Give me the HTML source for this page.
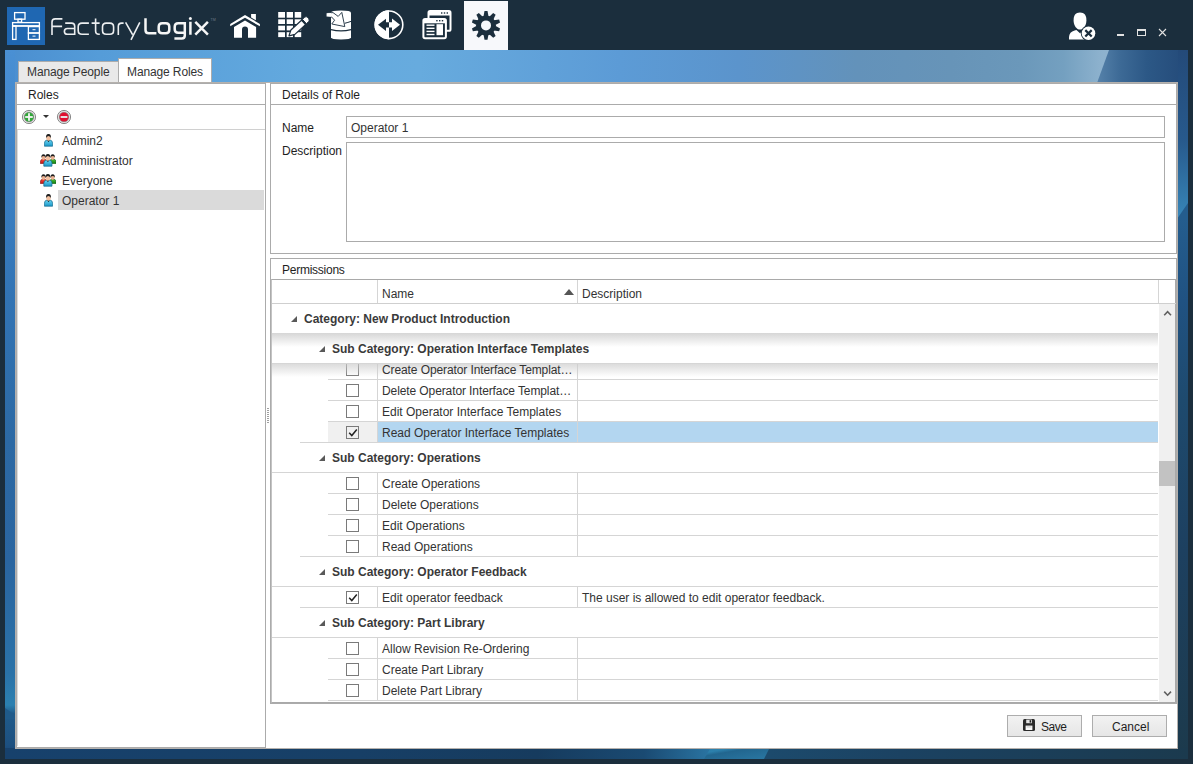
<!DOCTYPE html>
<html>
<head>
<meta charset="utf-8">
<style>
*{box-sizing:border-box;margin:0;padding:0}
html,body{width:1193px;height:764px;overflow:hidden;background:#1b2e3d;font-family:"Liberation Sans",sans-serif;font-size:12px;color:#1e1e1e}
.a{position:absolute}
.t{position:absolute;white-space:nowrap;line-height:14px}
#canvas{left:15px;top:82px;width:1163px;height:667px;background:#fff;border:1px solid #b5b1ad}
.vl{position:absolute;width:1px;background:#ababab}
.hl{position:absolute;height:1px;background:#ababab}
.g{position:absolute;height:1px;background:#d9d9d9}
.cb{position:absolute;width:13px;height:13px;border:1px solid #7a7a7a}
.row{position:absolute;color:#333}
.bold{font-weight:bold;color:#3a3a3a}
.tri{position:absolute;width:0;height:0;border-left:6.5px solid transparent;border-bottom:6.5px solid #595959}
.btn{position:absolute;border:1px solid #adadad;background:linear-gradient(#f2f2f2,#e6e6e6);}
</style>
</head>
<body>
<div class="a" style="left:5px;top:50px;width:1183px;height:33px;background:linear-gradient(90deg,#4a8ed0 0%,#559cd8 8%,#63a9de 25%,#67abde 35%,#5c9bd6 52%,#5b94cc 62%,#6392ba 72%,#6794b8 80%,#6b98ba 86%,#74a0c0 89.5%,#8cb1cd 92.5%,#93b6d1 95%,#93b6d1 100%)"></div>
<div class="a" style="left:1097px;top:50px;width:91px;height:33px;clip-path:polygon(12px 0,91px 0,91px 33px,0 33px);background:linear-gradient(90deg,#5682aa 0%,#3d6a96 25%,#2c5886 55%,#244a79 100%)"></div>
<div class="a" style="left:5px;top:50px;width:10px;height:709px;background:linear-gradient(180deg,#4a90d4 0%,#3f84c8 14%,#3274b4 35%,#2c69a4 55%,#2a65a0 72%,#2a72a8 88%,#2b80b0 92.4%,#1f5a8a 93.6%,#1d5080 98%,#174270 100%)"></div>
<div class="a" style="left:5px;top:705px;width:10px;height:14px;clip-path:polygon(0 3px,10px 10px,10px 14px,0 14px);background:#1f5a8a"></div>
<div class="a" style="left:1178px;top:50px;width:10px;height:709px;background:linear-gradient(180deg,#244a79 0%,#27598c 12.7%,#3786b8 23.6%,#245d8e 23.7%,#205282 35.3%,#1e4a6e 49.4%,#1d4060 70.5%,#1c3a4c 100%)"></div>
<div class="a" style="left:1178px;top:200px;width:10px;height:18px;clip-path:polygon(0 17.5px,10px 3px,10px 18px,0 18px);background:#245d8e"></div>
<div class="a" style="left:5px;top:748px;width:1183px;height:11px;background:linear-gradient(90deg,#17416c 0%,#173f66 30%,#163b5e 45%,#1a4a72 54%,#2a74a2 59.6%,#1c4a6c 59.7%,#1c4a6c 64.7%,#1b4262 75.7%,#1b3a4e 100%)"></div>
<div class="a" style="left:640px;top:749px;width:135px;height:10px;clip-path:polygon(70px 0,129px 0,124px 10px,64px 10px);background:linear-gradient(170deg,#2b7ba8 0%,#2c80ac 45%,#22668f 55%,#2a78a4 100%)"></div>

<!-- top bar -->
<svg class="a" style="left:0;top:0" width="1193" height="50" viewBox="0 0 1193 50">
<rect x="7" y="7" width="38" height="38" fill="#1f67b2"/>
<g fill="none" stroke="#fff" stroke-width="1.3">
<rect x="14.6" y="12.6" width="10.4" height="6.6"/>
<rect x="18" y="19.2" width="3.6" height="3"/>
<rect x="12.6" y="22.6" width="26.8" height="3.4"/>
<rect x="12.6" y="26" width="3.4" height="13.4"/>
<rect x="28.4" y="26.6" width="11" height="6.4"/>
<rect x="28.4" y="33" width="11" height="6.4"/>
</g>
<rect x="12.6" y="25.2" width="26.8" height="1.4" fill="#fff"/>
<rect x="32.5" y="29.2" width="3" height="1" fill="#fff"/>
<rect x="32.5" y="35.6" width="3" height="1" fill="#fff"/>
<g fill="none" stroke="#eceef0" stroke-width="1.6">
<path d="M62.4,18.9 L55.2,18.9 Q52,18.9 52,22.1 L52,35.1 M52,26.4 L62.1,26.4"/>
<path d="M65.2,23.1 L71.5,23.1 Q74.7,23.1 74.7,26.3 L74.7,35.1 M74.7,28.5 L67.4,28.5 Q64.4,28.5 64.4,31.4 Q64.4,34.3 67.4,34.3 L74.7,34.3"/>
<path d="M88.9,23.1 L82,23.1 Q78.2,23.1 78.2,26.9 L78.2,30.5 Q78.2,34.3 82,34.3 L88.9,34.3"/>
<path d="M95.6,18.6 L95.6,31 Q95.6,34.3 98.9,34.3 L99.8,34.3 M91.6,23.1 L99.6,23.1"/>
<path d="M106.3,23.1 L109.8,23.1 Q113.6,23.1 113.6,26.9 L113.6,30.5 Q113.6,34.3 109.8,34.3 L106.3,34.3 Q102.5,34.3 102.5,30.5 L102.5,26.9 Q102.5,23.1 106.3,23.1 Z"/>
<path d="M118.3,35.1 L118.3,26.5 Q118.3,23.1 121.7,23.1 L123.6,23.1"/>
<path d="M125.6,22.4 L132.6,34.6 M139.8,22.4 L131,39.8"/>
</g>
<g fill="none" stroke="#f6f6f6" stroke-width="2.5">
<path d="M145.5,18.2 L145.5,30 Q145.5,33.3 148.8,33.3 L156.4,33.3"/>
<path d="M162.2,23.2 L165.8,23.2 Q169.3,23.2 169.3,26.7 L169.3,29.8 Q169.3,33.3 165.8,33.3 L162.2,33.3 Q158.7,33.3 158.7,29.8 L158.7,26.7 Q158.7,23.2 162.2,23.2 Z"/>
<path d="M184.8,23.2 L178.2,23.2 Q174.7,23.2 174.7,26.7 L174.7,29.3 Q174.7,32.8 178.2,32.8 L184.8,32.8 M184.8,22 L184.8,35.6 Q184.8,38.6 181.8,38.6 L174.4,38.6"/>
<path d="M190.4,21.8 L190.4,34.8 M195.3,21.9 L207.9,34.7 M207.9,21.9 L195.3,34.7"/>
</g>
<circle cx="190.4" cy="18.6" r="1.5" fill="#f6f6f6"/>
<text x="210.5" y="20.6" font-family="Liberation Sans" font-size="3.6" fill="#6d7a86">TM</text>
<!-- home -->
<g fill="#fff">
<polygon points="230.2,23.9 245,15 259.9,23.9 259.9,26.3 245,17.7 230.2,26.3"/>
<polygon points="251.1,14 255.9,14 255.9,20.3 251.1,17.5"/>
<path d="M234,27 L245,20.4 L256.1,27 L256.1,37.8 L248,37.8 L248,29.6 A3,3 0 0 0 242,29.6 L242,37.8 L234,37.8 Z"/>
</g>
<!-- grid+pencil -->
<g fill="#fff">
<rect x="278.2" y="12" width="6.8" height="5.7"/><rect x="286.7" y="12" width="6.3" height="5.7"/><rect x="294.7" y="12" width="6.5" height="5.7"/>
<rect x="278.2" y="19.3" width="6.8" height="4.7"/><rect x="286.7" y="19.3" width="6.3" height="4.7"/><rect x="294.7" y="19.3" width="6.5" height="4.7"/>
<rect x="278.2" y="25.7" width="6.8" height="4.7"/><rect x="286.7" y="25.7" width="6.3" height="4.7"/><rect x="294.7" y="25.7" width="6.5" height="4.7"/>
<rect x="278.2" y="32.2" width="6.8" height="4.9"/><rect x="286.7" y="32.2" width="6.3" height="4.9"/><rect x="294.7" y="32.2" width="6.5" height="4.9"/>
</g>
<polygon points="289,35.8 290.9,30 301.5,20.2 305.5,24.6 294.9,34.4" fill="#fff" stroke="#1b2e3d" stroke-width="1.2" stroke-linejoin="round"/>
<path d="M302.4,19.3 L304.8,17.1 Q306.2,16 307.6,17.4 L308.6,18.6 Q309.8,20.2 308.8,21.5 L306.4,23.7 Z" fill="#fff" stroke="#1b2e3d" stroke-width="1"/>
<!-- database -->
<path d="M331,12.6 Q331,10.4 341,10.4 Q351,10.4 351,12.6 L351,37.2 Q351,39.4 341,39.4 Q331,39.4 331,37.2 Z" fill="#fff"/>
<path d="M331,29.6 Q341,32.2 351,29.6" fill="none" stroke="#1b2e3d" stroke-width="1.1"/>
<path d="M344.6,23.3 Q348,22.5 351,21.4" fill="none" stroke="#1b2e3d" stroke-width="1"/>
<path d="M326.8,13 L333,12.6 L338.2,16.4 L341.8,12.4 L344.8,26.6 L331.8,24 L334.6,20.2 L331.6,17 L326.8,16.6 Z" fill="#fff" stroke="#1b2e3d" stroke-width="0.9" stroke-linejoin="miter"/>
<path d="M326.6,13.2 L331,13 L331,16.8 L326.6,16.6 Z" fill="#fff"/>
<!-- circle arrows -->
<circle cx="389" cy="24.8" r="13.8" fill="none" stroke="#fff" stroke-width="1.6"/>
<path d="M389,10.3 A14.5,14.5 0 0 0 389,39.3 Z" fill="#fff"/>
<polygon points="378,24.8 386,18.7 386,22.2 389,22.2 389,27.4 386,27.4 386,31" fill="#1b2e3d"/>
<polygon points="400,24.8 392,18.6 392,22.2 389,22.2 389,27.4 392,27.4 392,31" fill="#fff"/>
<!-- windows -->
<rect x="428.5" y="11.1" width="22" height="19.7" rx="1.6" fill="none" stroke="#fff" stroke-width="2"/>
<rect x="429" y="11.5" width="21" height="4" fill="#fff"/>
<rect x="423.4" y="19" width="22.5" height="19.2" rx="1.6" fill="#1b2e3d" stroke="#fff" stroke-width="2"/>
<rect x="424" y="19.5" width="21.5" height="3.8" fill="#fff"/>
<g fill="#1b2e3d"><rect x="441" y="12.3" width="1.4" height="1.4"/><rect x="443.8" y="12.3" width="1.4" height="1.4"/><rect x="446.6" y="12.3" width="1.4" height="1.4"/>
<rect x="436.2" y="20" width="1.4" height="1.4"/><rect x="439" y="20" width="1.4" height="1.4"/><rect x="441.8" y="20" width="1.4" height="1.4"/></g>
<g fill="#fff"><rect x="426.5" y="24.5" width="8" height="1.4"/><rect x="426.5" y="27.6" width="8" height="1.4"/><rect x="426.5" y="30.7" width="8" height="1.4"/><rect x="426.5" y="33.8" width="8" height="1.4"/>
<rect x="436.5" y="24.2" width="6.5" height="11"/></g>
<!-- gear box -->
<rect x="464" y="1" width="44" height="49" fill="#f7f8fb"/>
<g transform="translate(486,25.4)" fill="#1b2e3d">
<circle r="10"/>
<g id="tooth"><path d="M-1.5,-14.3 L1.5,-14.3 L2.5,-9 L-2.5,-9 Z"/></g>
<use href="#tooth" transform="rotate(36)"/><use href="#tooth" transform="rotate(72)"/><use href="#tooth" transform="rotate(108)"/><use href="#tooth" transform="rotate(144)"/><use href="#tooth" transform="rotate(180)"/><use href="#tooth" transform="rotate(216)"/><use href="#tooth" transform="rotate(252)"/><use href="#tooth" transform="rotate(288)"/><use href="#tooth" transform="rotate(324)"/>
<circle r="5" fill="#f7f8fb"/>
</g>
<!-- user -->
<g fill="#fff">
<path d="M1080,12.5 C1084.6,12.5 1086.4,15.6 1086.4,20.2 C1086.4,25.6 1083.4,29.6 1080,29.6 C1076.6,29.6 1073.6,25.6 1073.6,20.2 C1073.6,15.6 1075.4,12.5 1080,12.5 Z"/>
<path d="M1069,39.6 L1069,37 Q1069.3,31.8 1074.6,30.4 L1076.4,29.9 L1080,33.2 L1083.6,29.9 L1086,30.6 L1086,39.6 Z"/>
</g>
<circle cx="1088.5" cy="33.3" r="7.7" fill="#1b2e3d"/>
<circle cx="1088.5" cy="33.3" r="6.8" fill="#fff"/>
<path d="M1085.3,30.1 L1091.7,36.5 M1091.7,30.1 L1085.3,36.5" stroke="#1b2e3d" stroke-width="2.2"/>
<!-- window controls -->
<rect x="1117" y="34" width="7" height="2" fill="#e2e2e2"/>
<rect x="1137" y="29" width="9" height="2" fill="#e2e2e2"/><rect x="1137" y="29" width="1" height="7" fill="#e2e2e2"/><rect x="1145" y="29" width="1" height="7" fill="#e2e2e2"/><rect x="1137" y="35" width="9" height="1" fill="#e2e2e2"/>
<path d="M1159,29 L1166,36 M1166,29 L1159,36" stroke="#e2e2e2" stroke-width="1.1"/>
</svg>

<!-- tabs -->
<div class="a" style="left:18px;top:61px;width:101px;height:23px;background:#e9e9e9;border:1px solid #acacac;border-bottom:none"></div>
<div class="t" style="left:27px;top:65px;color:#333;letter-spacing:-0.12px">Manage People</div>
<div class="a" style="left:118px;top:58px;width:94px;height:26px;background:#fff;border:1px solid #acacac;border-bottom:none"></div>
<div class="t" style="left:127px;top:65px;color:#333;letter-spacing:-0.12px">Manage Roles</div>

<div id="canvas" class="a"></div>
<!-- roles panel -->
<div class="a" style="left:16px;top:83px;width:250px;height:665px;border:1px solid #ababab"></div>
<div class="t" style="left:28px;top:88px;color:#1e1e1e">Roles</div>
<div class="hl" style="left:17px;top:104px;width:248px"></div>
<div class="hl" style="left:17px;top:129px;width:248px;background:#d0d0d0"></div>
<div class="vl" style="left:17px;top:130px;height:616px;background:#dcdcdc"></div>
<svg class="a" style="left:21px;top:109px" width="52" height="16" viewBox="0 0 52 16">
<circle cx="8" cy="8" r="6.6" fill="#e6e6e6" stroke="#7c7c7c" stroke-width="0.9"/>
<circle cx="8" cy="8" r="5.2" fill="#9a9a9a"/>
<circle cx="8" cy="8" r="4.5" fill="#30a838"/>
<rect x="7.1" y="4.2" width="1.8" height="7.6" fill="#f4f4f4"/><rect x="4.2" y="7.1" width="7.6" height="1.8" fill="#f4f4f4"/>
<path d="M22,6 L28,6 L25,9 Z" fill="#333"/>
<circle cx="43" cy="8" r="6.6" fill="#e6e6e6" stroke="#7c7c7c" stroke-width="0.9"/>
<circle cx="43" cy="8" r="5.2" fill="#9a9a9a"/>
<circle cx="43" cy="8" r="4.5" fill="#e01030"/>
<rect x="39.6" y="7.1" width="6.8" height="1.8" fill="#e8f4f4"/>
</svg>
<svg width="0" height="0" style="position:absolute">
<defs>
<linearGradient id="gc" x1="0" y1="0" x2="0" y2="1"><stop offset="0" stop-color="#6fd8f4"/><stop offset="1" stop-color="#1896c8"/></linearGradient>
<linearGradient id="gr" x1="0" y1="0" x2="0" y2="1"><stop offset="0" stop-color="#ff5040"/><stop offset="1" stop-color="#c01010"/></linearGradient>
<linearGradient id="gg" x1="0" y1="0" x2="0" y2="1"><stop offset="0" stop-color="#50c040"/><stop offset="1" stop-color="#108010"/></linearGradient>
<g id="person">
<path d="M0.4,12.2 L0.4,9.2 Q0.5,6.3 3.2,5.9 L5.8,5.9 Q8.5,6.3 8.6,9.2 L8.6,12.2 Z" fill="url(#gc)" stroke="#176a8c" stroke-width="0.7"/>
<path d="M3,5.9 L4.5,8.3 L6,5.9 Z" fill="#1a2a30"/>
<ellipse cx="4.5" cy="4.1" rx="2.2" ry="2.7" fill="#f2c0a0"/>
<path d="M2.1,4.3 Q1.6,0 4.5,0 Q7.4,0 6.9,4.3 Q6.6,2.2 4.5,2 Q2.4,2.2 2.1,4.3 Z" fill="#1e1e1e"/>
</g>
<g id="pr">
<path d="M0.3,9.3 L0.3,7.8 Q0.4,5.2 2.6,4.9 L4.6,4.9 Q6.7,5.2 6.8,7.8 L6.8,9.3 Z" stroke-width="0.6"/>
<ellipse cx="3.5" cy="3.4" rx="1.9" ry="2.3" fill="#eab090" stroke="none"/>
<path d="M1.4,3.6 Q1,0 3.5,0 Q6,0 5.6,3.6 Q5.3,1.9 3.5,1.7 Q1.7,1.9 1.4,3.6 Z" fill="#1e1e1e" stroke="none"/>
</g>
<g id="group">
<use href="#pr" x="0" y="0.2" fill="url(#gr)" stroke="#801010"/>
<use href="#pr" x="9.2" y="0.2" fill="url(#gg)" stroke="#0c5a0c"/>
<use href="#person" x="3.4" y="0"/>
</g>
</defs>
</svg>
<svg class="a" style="left:44px;top:134px" width="9" height="13" viewBox="0 0 9 13"><use href="#person"/></svg>
<svg class="a" style="left:40px;top:154px" width="16" height="13" viewBox="0 0 16 13"><use href="#group"/></svg>
<svg class="a" style="left:40px;top:174px" width="16" height="13" viewBox="0 0 16 13"><use href="#group"/></svg>
<div class="a" style="left:58px;top:190px;width:206px;height:20px;background:#dadada"></div>
<svg class="a" style="left:44px;top:194px" width="9" height="13" viewBox="0 0 9 13"><use href="#person"/></svg>
<div class="t" style="left:62px;top:134px;color:#333">Admin2</div>
<div class="t" style="left:62px;top:154px;color:#333">Administrator</div>
<div class="t" style="left:62px;top:174px;color:#333">Everyone</div>
<div class="t" style="left:62px;top:194px;color:#333">Operator 1</div>

<!-- details -->
<div class="a" style="left:270px;top:83px;width:907px;height:171px;border:1px solid #ababab"></div>
<div class="t" style="left:282px;top:88px">Details of Role</div>
<div class="hl" style="left:271px;top:104px;width:905px"></div>
<div class="t" style="left:282px;top:121px">Name</div>
<div class="a" style="left:346px;top:116px;width:819px;height:22px;border:1px solid #ababab"></div>
<div class="t" style="left:351px;top:121px;color:#333">Operator 1</div>
<div class="t" style="left:282px;top:144px">Description</div>
<div class="a" style="left:346px;top:142px;width:819px;height:100px;border:1px solid #ababab"></div>

<!-- permissions -->
<div class="a" style="left:270px;top:258px;width:907px;height:446px;border:1px solid #ababab"></div>
<div class="t" style="left:282px;top:263px;letter-spacing:-0.25px">Permissions</div>
<div class="a" style="left:271px;top:279px;width:905px;height:424px;border:1px solid #a9a9a9;border-left-color:#c4c4c4;background:#fff"></div>
<div class="hl" style="left:272px;top:303px;width:904px;background:#cfcfcf"></div>
<div class="vl" style="left:377px;top:280px;height:23px;background:#d5d5d5"></div>
<div class="vl" style="left:577px;top:280px;height:23px;background:#d5d5d5"></div>
<div class="vl" style="left:1158px;top:280px;height:23px;background:#d5d5d5"></div>
<div class="t" style="left:382px;top:287px;color:#333">Name</div>
<div class="t" style="left:582px;top:287px;color:#333">Description</div>
<div class="a" style="left:564px;top:289px;width:0;height:0;border-left:5px solid transparent;border-right:5px solid transparent;border-bottom:6px solid #555"></div>
<div class="a" style="left:272px;top:304px;width:886px;height:398px;overflow:hidden">
<div class="a" style="left:-272px;top:-304px;width:1193px;height:764px">
<div class="vl" style="left:377px;top:359px;height:20px;background:#d5d5d5"></div>
<div class="vl" style="left:577px;top:359px;height:20px;background:#d5d5d5"></div>
<div class="cb" style="left:346px;top:363px"></div>
<div class="hl" style="left:328px;top:379px;width:830px;background:#d5d5d5"></div>
<div class="vl" style="left:377px;top:380px;height:20px;background:#d5d5d5"></div>
<div class="vl" style="left:577px;top:380px;height:20px;background:#d5d5d5"></div>
<div class="cb" style="left:346px;top:384px"></div>
<div class="hl" style="left:328px;top:400px;width:830px;background:#d5d5d5"></div>
<div class="vl" style="left:377px;top:401px;height:20px;background:#d5d5d5"></div>
<div class="vl" style="left:577px;top:401px;height:20px;background:#d5d5d5"></div>
<div class="cb" style="left:346px;top:405px"></div>
<div class="hl" style="left:328px;top:421px;width:830px;background:#d5d5d5"></div>
<div class="a" style="left:328px;top:422px;width:49px;height:20px;background:#f0f0f0"></div>
<div class="a" style="left:378px;top:422px;width:780px;height:20px;background:#b3d6f0"></div>
<div class="vl" style="left:377px;top:422px;height:20px;background:#d5d5d5"></div>
<div class="vl" style="left:577px;top:422px;height:20px;background:#d5d5d5"></div>
<div class="cb" style="left:346px;top:426px"></div>
<svg class="a" style="left:348px;top:428px" width="10" height="10" viewBox="0 0 10 10"><path d="M1.2,4.8 L3.8,7.6 L8.8,1.6" fill="none" stroke="#222" stroke-width="1.5"/></svg>
<div class="hl" style="left:300px;top:442px;width:858px;background:#d5d5d5"></div>
<div class="hl" style="left:272px;top:472px;width:886px;background:#d5d5d5"></div>
<div class="vl" style="left:377px;top:473px;height:20px;background:#d5d5d5"></div>
<div class="vl" style="left:577px;top:473px;height:20px;background:#d5d5d5"></div>
<div class="cb" style="left:346px;top:477px"></div>
<div class="hl" style="left:328px;top:493px;width:830px;background:#d5d5d5"></div>
<div class="vl" style="left:377px;top:494px;height:20px;background:#d5d5d5"></div>
<div class="vl" style="left:577px;top:494px;height:20px;background:#d5d5d5"></div>
<div class="cb" style="left:346px;top:498px"></div>
<div class="hl" style="left:328px;top:514px;width:830px;background:#d5d5d5"></div>
<div class="vl" style="left:377px;top:515px;height:20px;background:#d5d5d5"></div>
<div class="vl" style="left:577px;top:515px;height:20px;background:#d5d5d5"></div>
<div class="cb" style="left:346px;top:519px"></div>
<div class="hl" style="left:328px;top:535px;width:830px;background:#d5d5d5"></div>
<div class="vl" style="left:377px;top:536px;height:20px;background:#d5d5d5"></div>
<div class="vl" style="left:577px;top:536px;height:20px;background:#d5d5d5"></div>
<div class="cb" style="left:346px;top:540px"></div>
<div class="hl" style="left:300px;top:556px;width:858px;background:#d5d5d5"></div>
<div class="hl" style="left:272px;top:586px;width:886px;background:#d5d5d5"></div>
<div class="vl" style="left:377px;top:587px;height:20px;background:#d5d5d5"></div>
<div class="vl" style="left:577px;top:587px;height:20px;background:#d5d5d5"></div>
<div class="cb" style="left:346px;top:591px"></div>
<svg class="a" style="left:348px;top:593px" width="10" height="10" viewBox="0 0 10 10"><path d="M1.2,4.8 L3.8,7.6 L8.8,1.6" fill="none" stroke="#222" stroke-width="1.5"/></svg>
<div class="hl" style="left:300px;top:607px;width:858px;background:#d5d5d5"></div>
<div class="hl" style="left:272px;top:637px;width:886px;background:#d5d5d5"></div>
<div class="vl" style="left:377px;top:638px;height:20px;background:#d5d5d5"></div>
<div class="vl" style="left:577px;top:638px;height:20px;background:#d5d5d5"></div>
<div class="cb" style="left:346px;top:642px"></div>
<div class="hl" style="left:328px;top:658px;width:830px;background:#d5d5d5"></div>
<div class="vl" style="left:377px;top:659px;height:20px;background:#d5d5d5"></div>
<div class="vl" style="left:577px;top:659px;height:20px;background:#d5d5d5"></div>
<div class="cb" style="left:346px;top:663px"></div>
<div class="hl" style="left:328px;top:679px;width:830px;background:#d5d5d5"></div>
<div class="vl" style="left:377px;top:680px;height:20px;background:#d5d5d5"></div>
<div class="vl" style="left:577px;top:680px;height:20px;background:#d5d5d5"></div>
<div class="cb" style="left:346px;top:684px"></div>
<div class="hl" style="left:328px;top:700px;width:830px;background:#d5d5d5"></div>
<div class="a" style="left:272px;top:363px;width:886px;height:14px;background:linear-gradient(rgba(214,214,214,1) 0px,rgba(214,214,214,1) 1px,rgba(205,205,205,0.7) 1px,rgba(255,255,255,0) 14px)"></div>
<div class="t row" style="left:382px;top:363px;letter-spacing:-0.1px;">Create Operator Interface Templat…</div>
<div class="t row" style="left:382px;top:384px;letter-spacing:-0.1px;">Delete Operator Interface Templat…</div>
<div class="t row" style="left:382px;top:405px;">Edit Operator Interface Templates</div>
<div class="t row" style="left:382px;top:426px;">Read Operator Interface Templates</div>
<div class="tri" style="left:318.8px;top:454.8px"></div>
<div class="t bold" style="left:332px;top:451px">Sub Category: Operations</div>
<div class="t row" style="left:382px;top:477px;">Create Operations</div>
<div class="t row" style="left:382px;top:498px;">Delete Operations</div>
<div class="t row" style="left:382px;top:519px;">Edit Operations</div>
<div class="t row" style="left:382px;top:540px;">Read Operations</div>
<div class="tri" style="left:318.8px;top:568.8px"></div>
<div class="t bold" style="left:332px;top:565px">Sub Category: Operator Feedback</div>
<div class="t row" style="left:382px;top:591px;">Edit operator feedback</div>
<div class="t row" style="left:582px;top:591px">The user is allowed to edit operator feedback.</div>
<div class="tri" style="left:318.8px;top:619.8px"></div>
<div class="t bold" style="left:332px;top:616px">Sub Category: Part Library</div>
<div class="t row" style="left:382px;top:642px;">Allow Revision Re-Ordering</div>
<div class="t row" style="left:382px;top:663px;">Create Part Library</div>
<div class="t row" style="left:382px;top:684px;">Delete Part Library</div>
<div class="a" style="left:272px;top:304px;width:886px;height:29px;background:#fff"></div>
<div class="tri" style="left:290.8px;top:315.8px"></div>
<div class="t bold" style="left:304px;top:312px">Category: New Product Introduction</div>
<div class="a" style="left:272px;top:333px;width:886px;height:30px;background:#fff"></div>
<div class="a" style="left:272px;top:333px;width:886px;height:14px;background:linear-gradient(#d6d6d6,rgba(255,255,255,0))"></div>
<div class="tri" style="left:318.8px;top:345.8px"></div>
<div class="t bold" style="left:332px;top:342px">Sub Category: Operation Interface Templates</div>
</div></div>
<div class="a" style="left:1159px;top:304px;width:16px;height:398px;background:#f0f0f0"></div>
<svg class="a" style="left:1163px;top:309px" width="10" height="8" viewBox="0 0 10 8"><path d="M1.2,6.2 L4.6,2.6 L8,6.2" fill="none" stroke="#606060" stroke-width="1.6"/></svg>
<svg class="a" style="left:1163px;top:690px" width="10" height="8" viewBox="0 0 10 8"><path d="M1.2,1.6 L4.6,5.2 L8,1.6" fill="none" stroke="#606060" stroke-width="1.6"/></svg>
<div class="a" style="left:1159px;top:461px;width:16px;height:25px;background:#c2c2c2"></div>
<!-- buttons -->
<div class="btn" style="left:1007px;top:715px;width:75px;height:22px"></div>
<svg class="a" style="left:1022px;top:718px" width="14" height="14" viewBox="0 0 14 14">
<path d="M1,2.5 Q1,1 2.5,1 L11.5,1 Q13,1 13,2.5 L13,11.5 Q13,13 11.5,13 L2.5,13 Q1,13 1,11.5 Z" fill="#2a2a2a"/>
<rect x="4.2" y="1.6" width="5.6" height="3.6" fill="#e4e4e4"/><rect x="7.6" y="2.2" width="1.4" height="2.4" fill="#1c1c1c"/>
<rect x="3.6" y="7.6" width="6.8" height="4.4" fill="#fafafa"/><rect x="4.6" y="8.6" width="4.8" height="0.7" fill="#b0b0b0"/>
</svg>
<div class="t" style="left:1041px;top:720px;color:#1e1e1e;letter-spacing:-0.5px">Save</div>
<div class="btn" style="left:1092px;top:715px;width:75px;height:22px"></div>
<div class="t" style="left:1112px;top:720px;color:#1e1e1e">Cancel</div>
<!-- splitter grip -->
<div class="a" style="left:267px;top:408px;width:2px;height:16px;background:repeating-linear-gradient(#a0a0a0 0 1px,transparent 1px 2px)"></div>

</body>
</html>
